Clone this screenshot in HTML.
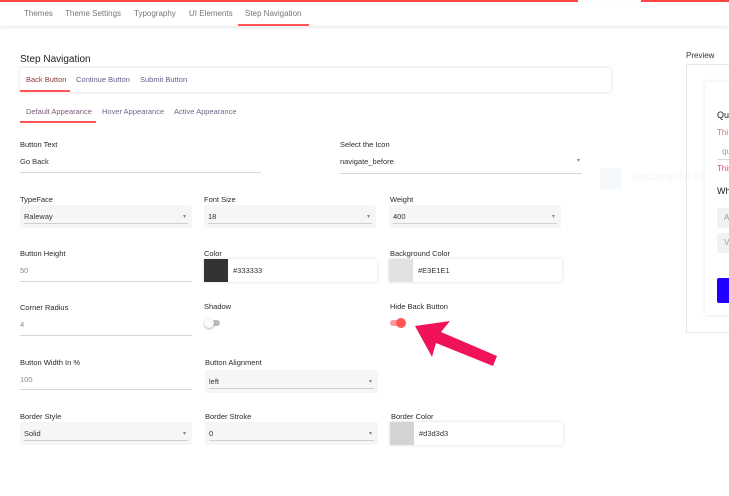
<!DOCTYPE html><html><head><style>
body{margin:0;width:729px;height:496px;overflow:hidden;background:#fff;font-family:"Liberation Sans",sans-serif;position:relative}
div,span{position:absolute;box-sizing:border-box}
.t{font-size:8px;color:#777;white-space:nowrap}
.l{font-size:7.5px;color:#2a2a2a;white-space:nowrap}
.v{font-size:7.5px;color:#333;white-space:nowrap}
.ul{height:1px;background:#d8d8d8}
.box{background:#f6f6f6;border-radius:2px}
.box .in{left:4px;right:4px;bottom:4px;height:1px;background:#d0d0d0}
.box .ar{right:6px;top:8px;font-size:6px;color:#888}
.box .v{left:4px;top:7px}
.cb{background:#fff;box-shadow:0 0 3px rgba(0,0,0,.15)}
</style></head><body>
<div style="left:0;top:0;width:578px;height:2px;background:#f44"></div>
<div style="left:641px;top:0;width:88px;height:2px;background:#f44"></div>
<div style="left:0;top:2px;width:729px;height:24px;box-shadow:0 2px 3px rgba(0,0,0,.08)"></div>
<span class="t" style="left:24px;top:9px">Themes</span>
<span class="t" style="left:65px;top:9px">Theme Settings</span>
<span class="t" style="left:134px;top:9px">Typography</span>
<span class="t" style="left:189px;top:9px">UI Elements</span>
<span class="t" style="left:245px;top:9px">Step Navigation</span>
<div style="left:238px;top:24px;width:71px;height:2px;background:#f55"></div>
<span style="left:20px;top:54px;font-size:10px;color:#222">Step Navigation</span>
<div class="cb" style="left:20px;top:68px;width:591px;height:24px"></div>
<span class="t" style="left:26px;top:75px;font-size:7.5px;color:#8a3a3a">Back Button</span>
<span class="t" style="left:76px;top:75px;font-size:7.5px;color:#6a5a8a">Continue Button</span>
<span class="t" style="left:140px;top:75px;font-size:7.5px;color:#6a5a8a">Submit Button</span>
<div style="left:20px;top:90px;width:50px;height:2px;background:#f55"></div>
<span class="t" style="left:26px;top:107px;font-size:7.5px;color:#7a5a7a">Default Appearance</span>
<span class="t" style="left:102px;top:107px;font-size:7.5px;color:#6a6a8a">Hover Appearance</span>
<span class="t" style="left:174px;top:107px;font-size:7.5px;color:#6a6a8a">Active Appearance</span>
<div style="left:20px;top:121px;width:76px;height:2px;background:#f55"></div>

<span class="l" style="left:20px;top:140px">Button Text</span>
<span class="v" style="left:20px;top:157px">Go Back</span>
<div class="ul" style="left:20px;top:172px;width:241px"></div>
<span class="l" style="left:340px;top:140px">Select the Icon</span>
<span class="v" style="left:340px;top:157px">navigate_before</span>
<span style="left:577px;top:157px;font-size:6px;color:#888">▾</span>
<div class="ul" style="left:340px;top:173px;width:242px"></div>

<span class="l" style="left:20px;top:195px">TypeFace</span>
<div class="box" style="left:20px;top:205px;width:172px;height:23px"><span class="v">Raleway</span><span class="ar">▾</span><div class="in"></div></div>
<span class="l" style="left:204px;top:195px">Font Size</span>
<div class="box" style="left:204px;top:205px;width:172px;height:23px"><span class="v">18</span><span class="ar">▾</span><div class="in"></div></div>
<span class="l" style="left:390px;top:195px">Weight</span>
<div class="box" style="left:389px;top:205px;width:172px;height:23px"><span class="v">400</span><span class="ar">▾</span><div class="in"></div></div>

<span class="l" style="left:20px;top:249px">Button Height</span>
<span class="v" style="left:20px;top:266px;color:#889">50</span>
<div class="ul" style="left:20px;top:281px;width:172px"></div>
<span class="l" style="left:204px;top:249px">Color</span>
<div class="cb" style="left:204px;top:259px;width:173px;height:23px"><div style="left:0;top:0;width:24px;height:23px;background:#333"></div><span class="v" style="left:29px;top:7px">#333333</span></div>
<span class="l" style="left:390px;top:249px">Background Color</span>
<div class="cb" style="left:389px;top:259px;width:173px;height:23px"><div style="left:0;top:0;width:24px;height:23px;background:#e3e1e1"></div><span class="v" style="left:29px;top:7px">#E3E1E1</span></div>

<span class="l" style="left:20px;top:303px">Corner Radius</span>
<span class="v" style="left:20px;top:320px;color:#889">4</span>
<div class="ul" style="left:20px;top:335px;width:172px"></div>
<span class="l" style="left:204px;top:302px">Shadow</span>
<div style="left:206px;top:320px;width:14px;height:6px;border-radius:3px;background:#bbb"></div>
<div style="left:204px;top:318px;width:10px;height:10px;border-radius:5px;background:#fafafa;box-shadow:0 1px 2px rgba(0,0,0,.3)"></div>
<span class="l" style="left:390px;top:302px">Hide Back Button</span>
<div style="left:390px;top:320px;width:15px;height:6px;border-radius:3px;background:#f99"></div>
<div style="left:396px;top:318px;width:10px;height:10px;border-radius:5px;background:#f55"></div>

<span class="l" style="left:20px;top:358px">Button Width In %</span>
<span class="v" style="left:20px;top:375px;color:#889">100</span>
<div class="ul" style="left:20px;top:389px;width:172px"></div>
<span class="l" style="left:205px;top:358px">Button Alignment</span>
<div class="box" style="left:205px;top:370px;width:173px;height:23px"><span class="v">left</span><span class="ar">▾</span><div class="in"></div></div>

<span class="l" style="left:20px;top:412px">Border Style</span>
<div class="box" style="left:20px;top:422px;width:172px;height:23px"><span class="v">Solid</span><span class="ar">▾</span><div class="in"></div></div>
<span class="l" style="left:205px;top:412px">Border Stroke</span>
<div class="box" style="left:205px;top:422px;width:173px;height:23px"><span class="v">0</span><span class="ar">▾</span><div class="in"></div></div>
<span class="l" style="left:391px;top:412px">Border Color</span>
<div class="cb" style="left:390px;top:422px;width:173px;height:23px"><div style="left:0;top:0;width:24px;height:23px;background:#d3d3d3"></div><span class="v" style="left:29px;top:7px">#d3d3d3</span></div>

<span style="left:686px;top:51px;font-size:8px;color:#333">Preview</span>
<div style="left:600px;top:168px;width:22px;height:21px;background:#f6f9fc"></div>
<span style="left:632px;top:171px;font-size:11px;color:#f3f4f7">Rectangular Snip</span>
<div style="left:686px;top:64px;width:50px;height:269px;border:1px solid #e5e5e5"></div>
<div style="left:705px;top:82px;width:30px;height:233px;background:#fff;box-shadow:0 0 4px rgba(0,0,0,.1)"></div>
<span style="left:717px;top:110px;font-size:9px;color:#222">Qu</span>
<span style="left:717px;top:128px;font-size:8px;color:#c77">Thi</span>
<span style="left:722px;top:147px;font-size:8px;color:#999">qu</span>
<div class="ul" style="left:717px;top:159px;width:14px"></div>
<span style="left:717px;top:164px;font-size:8px;color:#e46">This</span>
<span style="left:717px;top:186px;font-size:9px;color:#222">Wh</span>
<div style="left:717px;top:208px;width:14px;height:20px;background:#f2f2f2"></div>
<div style="left:717px;top:233px;width:14px;height:20px;background:#f2f2f2"></div>
<span style="left:724px;top:213px;font-size:8px;color:#999">A</span>
<span style="left:724px;top:238px;font-size:8px;color:#999">V</span>
<div style="left:717px;top:278px;width:14px;height:25px;background:#2200ff;border-radius:2px"></div>

<svg style="position:absolute;left:0;top:0" width="729" height="496"><polygon points="415,326 450,321 441,332 497,356 493,366 436,343 432,357" fill="#f0135a"/></svg>
</body></html>
